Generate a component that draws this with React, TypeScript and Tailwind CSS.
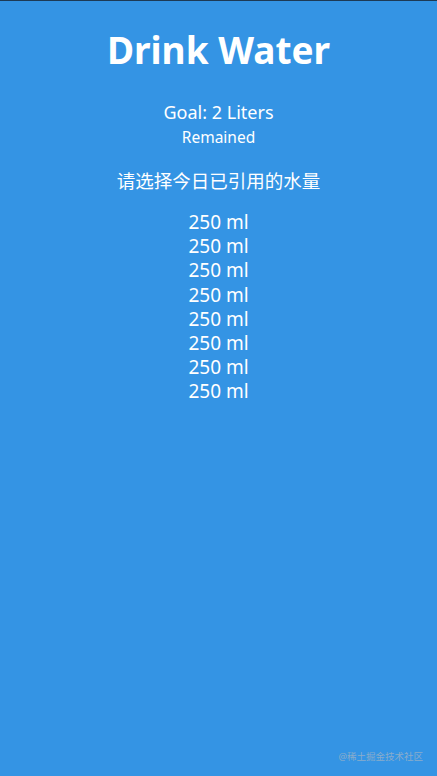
const CUPS = Array.from({ length: 8 }, (_, i) => i);

export default function App() {
  return (
    <div
      className="relative flex min-h-[776px] flex-col items-center border-t border-[#1d3a55] bg-[#3494e4] text-white"
      style={{ fontFamily: '"Noto Sans", "Noto Sans CJK SC", sans-serif' }}
    >
      <h1 className="mt-[21px] text-[37px] font-bold leading-[56px]">Drink Water</h1>
      <h3 className="mt-[22px] text-[18px] leading-[24px]">Goal: 2 Liters</h3>
      <p className="mt-[1px] text-[15.5px] leading-[24px]">Remained</p>
      <p className="mt-[19px] text-[18.5px] leading-[26px]">请选择今日已引用的水量</p>
      <div className="mt-[16px] flex flex-col items-center">
        {CUPS.map((i) => (
          <div key={i} className="text-[19px] leading-[24.2px]">
            250 ml
          </div>
        ))}
      </div>
      <span className="absolute bottom-[12px] right-[14px] text-[9.5px] text-[#8aaccb]">
        @稀土掘金技术社区
      </span>
    </div>
  );
}
